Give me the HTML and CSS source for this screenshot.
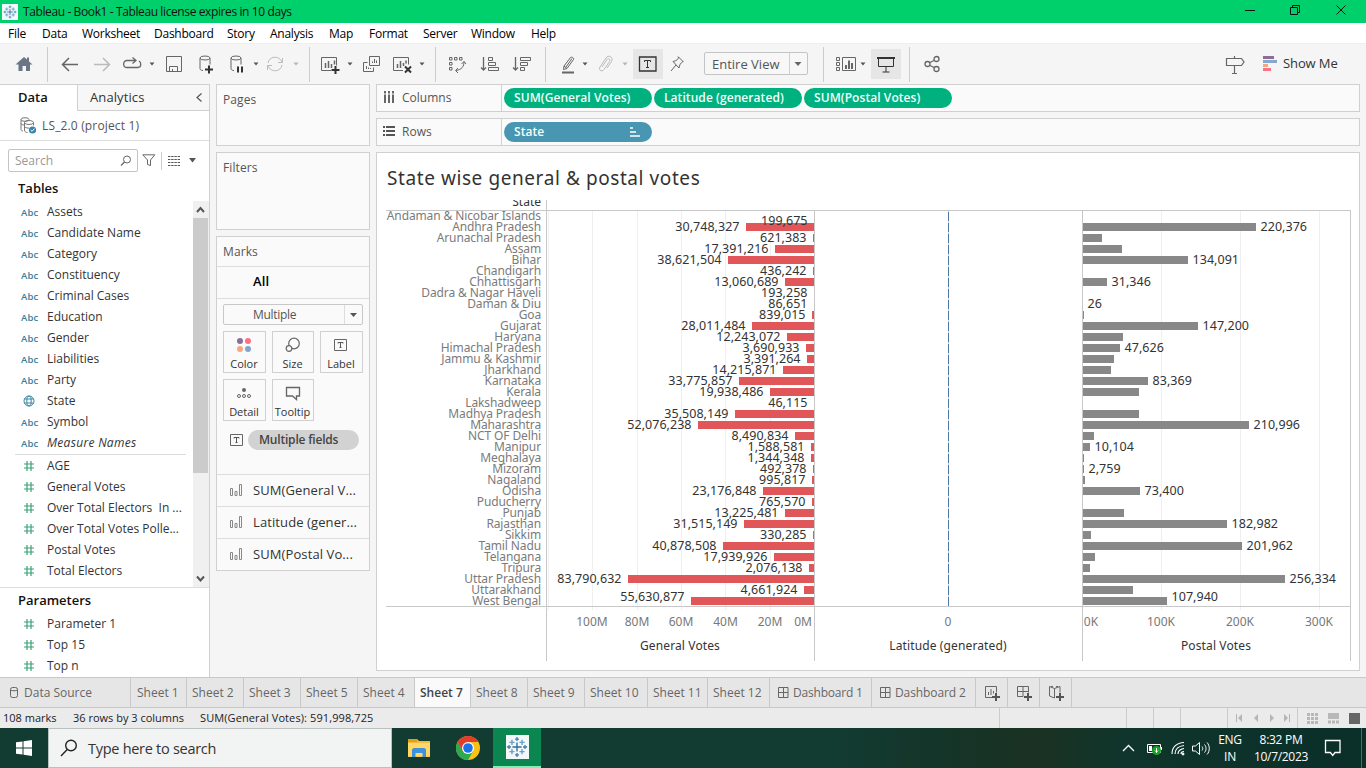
FILE: index.html
```html
<!DOCTYPE html>
<html lang="en">
<head>
<meta charset="utf-8">
<title>Tableau - Book1</title>
<link rel="stylesheet" href="styles.css">
</head>
<body>
<svg class="defs" width="0" height="0">
  <symbol id="tableau" viewBox="0 0 24 24"><path d="M12 7v10M7 12h10" stroke="#2f6f9c" stroke-width="1.500"/><path d="M12 1v4.500M9.800 3.300h4.400M12 18.500V23M9.800 20.700h4.400M3.300 9.800v4.400M1 12h4.500M20.700 9.800v4.400M18.500 12H23" stroke="#3f7fb0" stroke-width="1.400"/><path d="M6.500 4.200v5.600M3.700 7h5.600M17.500 4.200v5.600M14.700 7h5.600M6.500 14.200v5.600M3.700 17h5.600M17.500 14.200v5.600M14.700 17h5.600" stroke="#6aa0c4" stroke-width="1.500"/></symbol>
  <symbol id="caret" viewBox="0 0 8 20"><path d="M1.500 8.500h5L4 11.500z" fill="#555"/></symbol>
  <symbol id="hash" viewBox="0 0 12 12"><path d="M4 1v10M8 1v10M1 4h10M1 8h10" stroke="#3aa177" stroke-width="1.2"/></symbol>
  <symbol id="bars" viewBox="0 0 14 14"><path d="M1.500 5.500h2v7h-2zM6 8.500h2v4H6zM10.500 1.500h2v11h-2z" fill="none" stroke="#888"/></symbol>
  <symbol id="tbox" viewBox="0 0 14 14"><path d="M.5 1.500h12v11H.5z" fill="none" stroke="#666"/><path d="M4 5.500V4.500h5v1M6.500 4.500v5M5.500 9.500h2" fill="none" stroke="#555"/></symbol>
  <symbol id="dash" viewBox="0 0 12 12"><path d="M1.500 .5h9.500v10H1.500zM6.500 .5v10M1.500 5.500h9.500" fill="none" stroke="#666"/></symbol>
</svg>

<header class="titlebar">
  <span class="logo"><svg width="14" height="14"><use href="#tableau"/></svg></span>
  <span class="title">Tableau - Book1 - Tableau license expires in 10 days</span>
  <svg class="winbtns" width="110" height="23" fill="none" stroke="#111"><path d="M5 10.500h10M50.500 7.500h7v7h-7zM52.500 7V5.500h7v7H58M96.500 5.500l9 9M105.500 5.500l-9 9"/></svg>
</header>

<nav class="menu">
  <span>File</span><span>Data</span><span>Worksheet</span><span>Dashboard</span><span>Story</span><span>Analysis</span><span>Map</span><span>Format</span><span>Server</span><span>Window</span><span>Help</span>
</nav>

<div class="toolbar">
  <svg class="ic m14" viewBox="0 0 20 20"><path d="M1.500 10.500L10 3l3 2.500V3.500h2v4l3.500 3H16V17h-4v-5H8.500v5h-4v-6.500z" fill="#6b7685"/></svg>
  <i class="sep m13"></i>
  <svg class="ic m12" viewBox="0 0 20 20" stroke-width="1.5"><path d="M18 10.500H2.500M9 4l-6.500 6.500L9 17"/></svg>
  <svg class="ic m12 off" viewBox="0 0 20 20" stroke-width="1.5"><path d="M2 10.500h15.500M11 4l6.500 6.500L11 17"/></svg>
  <svg class="ic m10" viewBox="0 0 20 20" stroke-width="1.300"><path d="M13 6.500H5c-4.500 0-4.500 7 0 7h11c3.500 0 3.500-5 1-6.500M10.500 3.500l3.500 3-3.500 3"/></svg>
  <svg class="ca m6"><use href="#caret"/></svg>
  <svg class="ic m8" viewBox="0 0 20 20"><path d="M2.500 2.500h15v15h-15zM5.500 17.500v-5h8v5M8.500 17v-2"/></svg>
  <svg class="ic m12" viewBox="0 0 20 20"><ellipse cx="9" cy="4" rx="5" ry="2"/><path d="M4 4V14.500c0 1 1 2 3 2M14 4V10.500"/><path d="M13 11.500v8M9 15.500h8" stroke-width="2" stroke="#333"/></svg>
  <svg class="ic m11" viewBox="0 0 20 20"><ellipse cx="9" cy="4" rx="5" ry="2"/><path d="M4 4V14.500c0 1 1 2 3 2M14 4V10.500"/><path d="M11 12.500v6M15 12.500v6" stroke-width="2" stroke="#333"/></svg>
  <svg class="ca m5"><use href="#caret"/></svg>
  <svg class="ic m5 off" viewBox="0 0 20 20"><path d="M3 9c1-7 11-8 14-1M17 11c-1 7-11 8-14 1M17.500 4v4.500H13M2.500 16v-4.500H7"/></svg>
  <svg class="ca m7 off"><use href="#caret"/></svg>
  <i class="sep m9"></i>
  <svg class="ic m10" viewBox="0 0 20 20"><path d="M11 16.500H1.500v-13h15v8"/><path d="M5.500 9v5M8.500 7v7M11.500 10v4M14.500 6.500v4" stroke-width="1.500"/><path d="M15.500 12v8M11.500 16h8" stroke-width="2" stroke="#333"/></svg>
  <svg class="ca m6"><use href="#caret"/></svg>
  <svg class="ic m7" viewBox="0 0 20 20"><path d="M8.500 2.500h10v9h-10zM6.500 8.500h-4v9h10v-4M11.500 9V7.500M13.500 9V5M15.500 9V6.500M5.500 15v-3M7.500 15v-1.500M9.500 15v-1"/></svg>
  <svg class="ic m12" viewBox="0 0 20 20"><path d="M10 16.500H.5v-13h15v7"/><path d="M4.500 10v4M7.500 7v7M10.500 9v3M13 6.500v3" stroke-width="1.500"/><path d="M12 12.500l6 6M18 12.500l-6 6" stroke-width="2" stroke="#333"/></svg>
  <svg class="ca m5"><use href="#caret"/></svg>
  <i class="sep m9"></i>
  <svg class="ic m11" viewBox="0 0 20 20"><path d="M2.500 3.500h2.500v2.500h-2.500zM7.500 3.500h2.500v2.500h-2.500zM12.500 3.500h2.500v2.500h-2.500zM2.500 8.500h2.500v2.500h-2.500zM2.500 13.500h2.500v2.500h-2.500zM17 7.500c0 5-2 8-8 9M14.500 10l2.500-2.500 2 2.500M11 14l-2.500 2.500 2.500 2.500"/></svg>
  <svg class="ic m13" viewBox="0 0 20 20"><path d="M3.500 3v13M1 13.500l2.500 2.500L6 13.500" stroke-width="1.300"/><path d="M8.500 3.500h4v3h-4zM8.500 8.500h7v3h-7zM8.500 13.500h10v3h-10z"/></svg>
  <svg class="ic m12" viewBox="0 0 20 20"><path d="M3.500 3v13M1 13.500l2.500 2.500L6 13.500" stroke-width="1.300"/><path d="M8.500 3.500h10v3h-10zM8.500 8.500h7v3h-7zM8.500 13.500h4v3h-4z"/></svg>
  <i class="sep m13"></i>
  <svg class="ic m12" viewBox="0 0 20 20"><path d="M6 12l6.500-8.500c1-1 4 .5 3 2L9 14.500l-3.500 1zM6 12l3 2.500M8 13l6-8.500"/><path d="M4 18.500h12" stroke-width="2"/></svg>
  <svg class="ca m3"><use href="#caret"/></svg>
  <svg class="ic m6 off" viewBox="0 0 20 20"><path d="M7 13l5-7.500c1.500-2 4 0 2.500 2L9 15.500c-2 3-6 .5-4-2.500L11 4c2.500-4 8-.5 5.500 3.500L12 14"/></svg>
  <svg class="ca m6 off"><use href="#caret"/></svg>
  <span class="tool-on m4"><svg class="ic" viewBox="0 0 20 20"><path d="M1.500 3h16.500v14H1.500z" stroke="#333" stroke-width="1.300"/><path d="M6.500 8V6.500h6V8M9.500 6.500V14M8 13.500h3" stroke="#333"/></svg></span>
  <svg class="ic m4" viewBox="0 0 20 20"><path d="M11 2.500l5.500 5.500M11.500 3c0 2-2 4-5.500 4.500l6 6.500c.5-3 1.500-5 4-6.500M9 11l-5 6"/></svg>
  <span class="select m17"><span>Entire View</span><b></b><svg class="ca" viewBox="0 0 8 20"><path d="M.5 8h7L4 12z" fill="#666"/></svg></span>
  <i class="sep m15"></i>
  <svg class="ic m12" viewBox="0 0 20 20"><path d="M.5 3.500h3v3h-3zM.5 8.500h3v3h-3zM.5 13.500h3v3h-3zM6.500 3.500h13v13h-13z"/><path d="M10 11v4M13 6.500v8.500M16 9v6" stroke-width="2"/></svg>
  <svg class="ca m3"><use href="#caret"/></svg>
  <span class="tool-on m4"><svg class="ic" viewBox="0 0 20 20"><path d="M2.500 4v8.500h15V4M10 12v6M6.500 18h7" stroke="#333"/><path d="M1 4h18" stroke="#333" stroke-width="2"/></svg></span>
  <i class="sep m8"></i>
  <svg class="ic m12" viewBox="0 0 20 20" stroke-width="1.300"><circle cx="5.500" cy="10" r="2.500"/><circle cx="14.500" cy="5" r="2.500"/><circle cx="14.500" cy="15" r="2.500"/><path d="M8 8.500l4-2M8 11.500l4 2"/></svg>
  <svg class="ic sign" viewBox="0 0 20 20"><path d="M1.500 4.500h15l2.500 3.500-2.500 3.500h-15zM9.500 2v2.500M9.500 11.500V19M7 19.500h5" stroke-width="1.200"/></svg>
  <svg class="m18" width="14" height="16"><path d="M0 0h11v3H0z" fill="#8b6f98"/><path d="M0 4h14v3H0z" fill="#86a7d0"/><path d="M0 8h5v3H0z" fill="#f2a77c"/><path d="M0 12h8v3H0z" fill="#fb7185"/></svg>
  <span class="showme m6">Show Me</span>
</div>

<main class="work">
  <aside class="data">
    <div class="dtabs"><b>Data</b><span>Analytics<svg width="8" height="12"><path d="M6.500 1.500L2 5.500l4.500 4" fill="none" stroke="#555" stroke-width="1.200"/></svg></span></div>
    <div class="source"><svg width="17" height="18" viewBox="0 0 17 18" fill="none" stroke="#777"><ellipse cx="5" cy="2.500" rx="4" ry="1.800"/><path d="M1 2.500v10c0 1 1 1.500 2 1.500M4.500 6v8"/><ellipse cx="9" cy="5.500" rx="4.500" ry="2"/><path d="M4.500 5.500v8c0 1 1.500 2 3 2M13.500 5.500v3M1 6.500c0 1 2 1.500 3 1.500M5 10c1 1 3 1.200 4 1"/><circle cx="12.500" cy="13" r="3.600" fill="#3584a9" stroke="none"/><path d="M10.700 13l1.400 1.400 2.300-2.800" stroke="#fff"/></svg><span>LS_2.0 (project 1)</span></div>
    <div class="find">
      <span class="box">Search<svg width="12" height="12"><circle cx="7" cy="4.500" r="3.500" fill="none" stroke="#666"/><path d="M4.500 7L1 10.500" stroke="#666" stroke-width="1.200"/></svg></span>
      <svg class="funnel" width="14" height="13"><path d="M.8.8h12L8.500 6v5.500l-3-1V6z" fill="none" stroke="#666"/></svg>
      <i></i>
      <svg class="cols" width="12" height="10"><path d="M0 .5h12M0 3.500h12M0 6.500h12M0 9.500h12" stroke="#555" stroke-dasharray="2.400 .8"/></svg>
      <svg class="tri" width="8" height="5"><path d="M0 0h7L3.500 4.500z" fill="#555"/></svg>
    </div>
    <h2>Tables</h2>
    <div class="lists">
      <ul class="fields">
        <li><em>Abc</em>Assets</li><li><em>Abc</em>Candidate Name</li><li><em>Abc</em>Category</li><li><em>Abc</em>Constituency</li><li><em>Abc</em>Criminal Cases</li><li><em>Abc</em>Education</li><li><em>Abc</em>Gender</li><li><em>Abc</em>Liabilities</li><li><em>Abc</em>Party</li>
        <li><svg width="12" height="12" fill="none" stroke="#3a86a3"><circle cx="6" cy="6" r="5"/><ellipse cx="6" cy="6" rx="2.200" ry="5"/><path d="M1.500 4h9M1.500 8h9"/></svg>State</li>
        <li><em>Abc</em>Symbol</li><li class="italic"><em>Abc</em>Measure Names</li>
        <li class="rule"></li>
        <li><svg><use href="#hash"/></svg>AGE</li><li><svg><use href="#hash"/></svg>General Votes</li><li><svg><use href="#hash"/></svg>Over Total Electors&nbsp; In ...</li><li><svg><use href="#hash"/></svg>Over Total Votes Polle...</li><li><svg><use href="#hash"/></svg>Postal Votes</li><li><svg><use href="#hash"/></svg>Total Electors</li>
      </ul>
      <div class="scroll"><svg width="15" height="17"><path d="M4 11l3.500-4L11 11" fill="none" stroke="#555" stroke-width="2"/></svg><i></i><svg width="15" height="17"><path d="M4 6.500l3.500 4L11 6.500" fill="none" stroke="#555" stroke-width="2"/></svg></div>
    </div>
    <div class="params">
      <h2>Parameters</h2>
      <ul class="fields"><li><svg><use href="#hash"/></svg>Parameter 1</li><li><svg><use href="#hash"/></svg>Top 15</li><li><svg><use href="#hash"/></svg>Top n</li></ul>
    </div>
  </aside>

  <section class="cards">
    <div class="card pages">Pages</div>
    <div class="card filters">Filters</div>
    <div class="card marks">
      <div class="mhead">Marks</div>
      <div class="mall">All</div>
      <div class="mbody">
        <div class="mselect"><span>Multiple</span><i><svg width="7" height="4"><path d="M0 0h7L3.500 4z" fill="#555"/></svg></i></div>
        <div class="mgrid">
          <div><svg width="16" height="16"><circle cx="4" cy="4" r="3" fill="#8b6f98"/><circle cx="12" cy="4" r="3" fill="#fb7185"/><circle cx="4" cy="12" r="3" fill="#f5a67d"/><circle cx="12" cy="12" r="3" fill="#80a5d0"/></svg>Color</div>
          <div><svg width="16" height="16" fill="none" stroke="#666" stroke-width="1.200"><circle cx="9" cy="6.500" r="5.300"/><circle cx="4" cy="11.500" r="2.800" fill="#fafafa"/></svg>Size</div>
          <div><svg width="14" height="16" viewBox="0 -1 14 16"><use href="#tbox" width="14" height="14"/></svg>Label</div>
          <div><svg width="16" height="16" fill="none" stroke="#666"><circle cx="8" cy="5" r="2" fill="#666" stroke="none"/><circle cx="3" cy="11" r="1.500"/><circle cx="8" cy="11" r="1.500"/><circle cx="13" cy="11" r="1.500"/></svg>Detail</div>
          <div><svg width="16" height="16" fill="none" stroke="#666" stroke-width="1.300"><path d="M1.500 2.500h13v8.500h-3v3.500L7.500 11h-6z"/></svg>Tooltip</div>
        </div>
        <div class="mpill"><svg width="14" height="14"><use href="#tbox"/></svg><span>Multiple fields</span></div>
      </div>
      <div class="mrow"><svg><use href="#bars"/></svg>SUM(General V...</div>
      <div class="mrow"><svg><use href="#bars"/></svg>Latitude (gener...</div>
      <div class="mrow"><svg><use href="#bars"/></svg>SUM(Postal Vo...</div>
    </div>
  </section>

  <section class="sheet">
    <div class="shelf"><div class="name"><svg width="13" height="13"><path d="M2 0v2.500M6 0v2.500M10 0v2.500M2 3.500V12M6 3.500V12M10 3.500V12" stroke="#666" stroke-width="2"/></svg>Columns</div><span class="pill">SUM(General Votes)</span><span class="pill">Latitude (generated)</span><span class="pill">SUM(Postal Votes)</span></div>
    <div class="shelf"><div class="name"><svg width="13" height="13"><path d="M0 2h2M0 6h2M0 10h2M3 2h9M3 6h9M3 10h9" stroke="#555" stroke-width="2"/></svg>Rows</div><span class="pill blue">State<svg width="10" height="10"><path d="M0 1h3M0 5h6M0 9h10" stroke="#fff" stroke-width="1.700"/></svg></span></div>
    <div class="view">
      <h1>State wise general &amp; postal votes</h1>
      <svg id="chart" width="982" height="470" viewBox="377 200 982 470"></svg>
    </div>
  </section>
</main>

<nav class="tabs">
  <span class="t-src"><svg width="10" height="12" fill="none" stroke="#666"><rect x="1.500" y=".5" width="7" height="10" rx="2"/><path d="M1.500 3c2 1 5 1 7 0"/></svg>Data Source</span>
  <span class="s1">Sheet 1</span><span class="s2">Sheet 2</span><span class="s">Sheet 3</span><span class="s">Sheet 5</span><span class="s">Sheet 4</span><span class="s2 on">Sheet 7</span><span class="s">Sheet 8</span><span class="s">Sheet 9</span><span class="s10">Sheet 10</span><span class="s11">Sheet 11</span><span class="s12">Sheet 12</span>
  <span class="d1"><svg width="12" height="12"><use href="#dash"/></svg>Dashboard 1</span><span class="d2"><svg width="12" height="12"><use href="#dash"/></svg>Dashboard 2</span>
  <span class="new"><svg width="17" height="16" fill="none" stroke="#666"><path d="M8 12.500H1.500V1.500h11v6M4.500 10V7M7 10V4M9.500 8.500V6"/><path d="M12 8v8M8 12h8" stroke-width="2" stroke="#555"/></svg></span>
  <span class="new"><svg width="17" height="16" fill="none" stroke="#666"><path d="M7 11.500H1.500v-10h11v6M7 1.500v10M1.500 6.500h11"/><path d="M12 8v8M8 12h8" stroke-width="2" stroke="#555"/></svg></span>
  <span class="new"><svg width="17" height="16" fill="none" stroke="#666"><path d="M6.500 3.500L1.500 1.500v9.500l5 2zM6.500 3.500l5.500-2v6M3 1.500h2M8 1.500h2"/><path d="M12 8v8M8 12h8" stroke-width="2" stroke="#555"/></svg></span>
</nav>

<div class="status">
  <span class="a">108 marks</span><span class="b">36 rows by 3 columns</span><span class="c">SUM(General Votes): 591,998,725</span>
  <i class="x1"></i><i class="x2"></i><i class="x3"></i><i class="x4"></i>
  <span class="page"><svg width="69" height="20" fill="#b5b5b5"><path d="M8 6h1v8H8zM14 6v8l-4-4zM30 6v8l-4-4zM42 6v8l4-4zM56 6v8l4-4zM61 6h1v8h-1z"/></svg></span>
  <svg class="views" width="68" height="20"><path d="M9 6.500h11M9 10.500h11M9 14.500h11" stroke="#b8b8b8" stroke-width="3" stroke-dasharray="3 1"/><path d="M30 5h11v6H30z" fill="#b8b8b8"/><path d="M30 14h11" stroke="#b8b8b8" stroke-width="3" stroke-dasharray="3 1"/><path d="M51 5h11v11H51z" fill="#666"/></svg>
</div>

<footer class="taskbar">
  <span class="start"><svg width="16" height="16" fill="#fff"><path d="M0 2.300L6.500 1.400v6.100H0zM7.500 1.200L16 0v7.500H7.500zM0 8.500h6.500v6.100L0 13.700zM7.500 8.500H16V16l-8.500-1.200z"/></svg></span>
  <span class="search"><svg width="18" height="18" fill="none" stroke="#222" stroke-width="1.400"><circle cx="11" cy="6.500" r="5.300"/><path d="M7.200 10.500L1 17"/></svg>Type here to search</span>
  <span class="app"><svg width="22" height="20"><path d="M0 1h9l2 2h11v16H0z" fill="#f5b93b"/><path d="M0 1h9v3H0z" fill="#e39d10"/><path d="M0 5h22v13.500H0z" fill="#ffd768"/><path d="M4 19v-7.500l1.500-1.500h11l1.500 1.500V19h-3.500v-4h-7v4z" fill="#3e92dc"/></svg></span>
  <span class="app chrome"><svg width="24" height="24" viewBox="-12 -12 24 24"><circle r="12" fill="#fbc116"/><path d="M-10.400-6A12 12 0 0 0 0 12L5.200 3-5.200 3z" fill="#2da94f"/><path d="M-10.400-6A12 12 0 0 1 10.400-6H0L-5.200 3z" fill="#e33b2e"/><circle r="6" fill="#fff"/><circle r="4.800" fill="#1a73e8"/></svg></span>
  <span class="app active"><span><svg width="22" height="22"><use href="#tableau"/></svg></span></span>
  <span class="tray"><svg width="90" height="24" fill="none" stroke="#fff"><path d="M1 15l5.500-5.500L12 15" stroke-width="1.300"/><path d="M25.500 8.500h13v8h-13zM39.500 11v3" /><path d="M27 10h3v5h-3z" fill="#fff" stroke="none"/><circle cx="34.500" cy="14.500" r="4.500" fill="#13a323" stroke="none"/><path d="M34.500 12v5M33 14.500l1.500 1.500 1.500-1.500"/><path d="M50 18C50 11 55 7 62 6.500M53 18c0-5 4-8 9-8.500M56 18c0-3 3-5 6-5.500M59 18c0-1.500 1.500-2.500 3-2.500" stroke-width="1.200"/><circle cx="61" cy="18" r="1" fill="#fff"/><path d="M70.500 10h3l4-3.500v12l-4-3.500h-3zM80 10.500c1 1 1 3 0 4M82.500 8.500c2 2 2 6 0 8M85 6.500c3 3 3 9 0 12"/></svg></span>
  <span class="lang">ENG<br>IN</span>
  <span class="clock">8:32 PM<br>10/7/2023</span>
  <svg class="note" width="18" height="18" fill="none" stroke="#fff" stroke-width="1.300"><path d="M1.500 1.500h14.500v12h-5l-2.300 3-2.300-3H1.500z"/></svg>
  <i class="peek"></i>
</footer>
<script src="chart.js"></script>
</body>
</html>
```
FILE: chart.js
```js
// name, general votes, postal votes, show postal label
const rows = [
  ["Andaman & Nicobar Islands", 199675, 0], ["Andhra Pradesh", 30748327, 220376, 1],
  ["Arunachal Pradesh", 621383, 25000], ["Assam", 17391216, 50500],
  ["Bihar", 38621504, 134091, 1], ["Chandigarh", 436242, 0],
  ["Chhattisgarh", 13060689, 31346, 1], ["Dadra & Nagar Haveli", 193258, 0],
  ["Daman & Diu", 86651, 26, 1], ["Goa", 839015, 2400],
  ["Gujarat", 28011484, 147200, 1], ["Haryana", 12243072, 52000],
  ["Himachal Pradesh", 3690933, 47626, 1], ["Jammu & Kashmir", 3391264, 40500],
  ["Jharkhand", 14215871, 36500], ["Karnataka", 33775857, 83369, 1],
  ["Kerala", 19938486, 72000], ["Lakshadweep", 46115, 0],
  ["Madhya Pradesh", 35508149, 72000], ["Maharashtra", 52076238, 210996, 1],
  ["NCT OF Delhi", 8490834, 15000], ["Manipur", 1588581, 10104, 1],
  ["Meghalaya", 1344348, 2500], ["Mizoram", 492378, 2759, 1],
  ["Nagaland", 995817, 3800], ["Odisha", 23176848, 73400, 1],
  ["Puducherry", 765570, 0], ["Punjab", 13225481, 53300],
  ["Rajasthan", 31515149, 182982, 1], ["Sikkim", 330285, 11400],
  ["Tamil Nadu", 40878508, 201962, 1], ["Telangana", 17939926, 16500],
  ["Tripura", 2076138, 10100], ["Uttar Pradesh", 83790632, 256334, 1],
  ["Uttarakhand", 4661924, 64500], ["West Bengal", 55630877, 107940, 1]
];
const svg = document.getElementById("chart");
const NS = "http://www.w3.org/2000/svg";
function el(tag, attrs, text) {
  const node = document.createElementNS(NS, tag);
  for (const key in attrs) node.setAttribute(key, attrs[key]);
  if (text !== undefined) node.textContent = text;
  svg.appendChild(node);
}
const vline = (x, y1, y2, cls) => el("rect", { x, y: y1, width: 1, height: y2 - y1, class: cls });
const text = (x, y, cls, s) => el("text", { x, y, class: cls }, s);
const number = (x, y, cls, n) => {
  const s = n.toLocaleString("en-US");
  const commas = s.split(",").length - 1;
  el("text", { x, y, class: cls, textLength: (s.length - commas) * 7.2 + commas * 3.3 }, s);
};
const generalWidth = v => v < 200000 ? 0 : Math.max(1, Math.floor(v / 1e6 * 2.22 + 0.4));
const postalWidth = v => v < 1000 ? 0 : Math.max(1, Math.round(v / 1000 * 0.79 - 0.9));

[548, 592, 637, 681, 725, 770, 1161, 1240, 1319].forEach(x => vline(x, 211, 610, "grid"));
vline(948, 211, 606, "grid-dark");
rows.forEach(([name, general, postal], i) => {
  const y = 212 + i * 11;
  const g = generalWidth(general);
  el("rect", { x: 814 - g, y, width: g, height: 8, class: "general" });
  el("rect", { x: 1083, y, width: postalWidth(postal), height: 8, class: "postal" });
  vline(948, y, y + 9, "lat");
});
rows.forEach(([name, general, postal, labelled], i) => {
  const base = 220 + i * 11;
  const shift = i === 0 ? 5 : i === 35 ? -4 : 0;
  text(541, base, "state", name);
  number(807.5 - generalWidth(general), base + shift + 0.2, "num end", general);
  if (labelled) number(1087.500 + postalWidth(postal), base + shift + 0.2, "num", postal);
});
el("rect", { x: 386, y: 210, width: 965, height: 1, class: "axis" });
el("rect", { x: 386, y: 606, width: 965, height: 1, class: "axis" });
vline(546, 200, 661, "axis");
[814, 1082, 1350].forEach(x => vline(x, 211, 661, "axis"));
text(541, 206, "head end", "State");
[["100M", 592], ["80M", 637], ["60M", 681], ["40M", 725.500], ["20M", 770], ["0M", 803],
 ["0", 948], ["0K", 1091], ["100K", 1161], ["200K", 1240], ["300K", 1319]]
  .forEach(([s, x]) => text(x, 626, "tick", s));
text(680, 650, "head mid", "General Votes");
text(948, 650, "head mid", "Latitude (generated)");
text(1216, 650, "head mid", "Postal Votes");
```
FILE: styles.css
```css
* { box-sizing: border-box; }
body { margin: 0; width: 1366px; height: 768px; overflow: hidden; background: #f5f5f5; font-family: "Open Sans", "Noto Sans", sans-serif; font-size: 12px; color: #333; }
h1, h2, ul { margin: 0; padding: 0; }
li { list-style: none; }
svg { flex: none; }
.defs { display: block; }
.m3 { margin-left: 3px; } .m4 { margin-left: 4px; } .m5 { margin-left: 5px; } .m6 { margin-left: 6px; }
.m7 { margin-left: 7px; } .m8 { margin-left: 8px; } .m9 { margin-left: 9px; } .m10 { margin-left: 10px; }
.m11 { margin-left: 11px; } .m12 { margin-left: 12px; } .m13 { margin-left: 13px; } .m14 { margin-left: 14px; }
.m15 { margin-left: 15px; } .m17 { margin-left: 17px; } .m18 { margin-left: 18px; }

.titlebar { height: 23px; background: #00d06b; display: flex; align-items: center; color: #111; }
.logo { width: 16px; height: 16px; margin-left: 2px; background: #f3f8fb; display: flex; align-items: center; justify-content: center; }
.title { margin-left: 5px; letter-spacing: -0.39px; }
.winbtns { margin-left: auto; margin-right: 16px; }

.menu { height: 20px; background: #fff; display: flex; align-items: center; padding: 1px 0 0 8px; color: #000; letter-spacing: -0.25px; }
.menu span { width: 40px; }
.menu span:nth-child(1) { width: 34px; }
.menu span:nth-child(3) { width: 72px; }
.menu span:nth-child(4) { width: 73px; }
.menu span:nth-child(5) { width: 43px; }
.menu span:nth-child(6) { width: 59px; }
.menu span:nth-child(8) { width: 54px; }
.menu span:nth-child(9) { width: 48px; }
.menu span:nth-child(10) { width: 60px; }

.toolbar { height: 41px; display: flex; align-items: center; border-top: 1px solid #eee; }
.ic { width: 20px; height: 20px; fill: none; stroke: #666; }
.ic:first-child { stroke: none; }
.ca { width: 8px; height: 20px; }
.off { opacity: .4; }
.sep { width: 1px; height: 35px; background: #ccc; }
.tool-on { width: 30px; height: 30px; background: #e6e6e6; display: flex; align-items: center; justify-content: center; }
.select { width: 104px; height: 23px; border: 1px solid #c4c4c4; border-radius: 2px; background: #f7f7f7; display: flex; align-items: center; font-size: 13px; color: #555; padding-left: 7px; margin-top: -1px; }
.select span { width: 77px; white-space: nowrap; }
.select b { width: 1px; height: 21px; background: #d0d0d0; margin-right: 4px; }
.sign { margin-left: 283px; }
.showme { font-size: 13px; color: #333; white-space: nowrap; letter-spacing: -0.1px; padding-bottom: 2px; }

.work { height: 593px; display: flex; }
.data { width: 210px; border-top: 1px solid #d0d0d0; border-right: 1px solid #d0d0d0; background: #fff; display: flex; flex-direction: column; }
.dtabs { height: 26px; display: flex; font-size: 13px; line-height: 25px; }
.dtabs b { width: 77px; padding-left: 18px; color: #111; font-weight: 600; }
.dtabs span { flex: 1; border-left: 1px solid #d0d0d0; border-bottom: 1px solid #d0d0d0; background: #f7f7f7; display: flex; align-items: center; justify-content: space-between; padding: 0 6px 0 12px; letter-spacing: 0.1px; }
.source { height: 30px; border-bottom: 1px solid #ddd; display: flex; align-items: center; padding-left: 20px; gap: 5px; color: #555; letter-spacing: 0.15px; }
.source span { padding-bottom: 1px; }
.find { height: 38px; display: flex; align-items: center; padding: 1px 0 0 8px; }
.box { width: 130px; height: 23px; border: 1px solid #c4c4c4; border-radius: 2px; display: flex; align-items: center; justify-content: space-between; padding: 0 5px 0 6px; color: #999; }
.funnel { margin-left: 4px; }
.find i { width: 1px; height: 18px; background: #ccc; margin-left: 5px; }
.cols { margin-left: 6px; }
.tri { margin-left: 9px; }
h2 { font-size: 13px; font-weight: 600; line-height: 18px; padding-left: 18px; color: #111; }
.lists { margin-top: 4px; height: 386px; display: flex; justify-content: space-between; }
.fields li { height: 21px; display: flex; align-items: center; width: 185px; white-space: nowrap; }
.fields li.rule { height: 2px; width: 171px; margin-left: 15px; border-bottom: 1px solid #ddd; margin-bottom: 0; }
.fields em { font-style: normal; font-weight: 600; font-size: 9.500px; color: #3a7e9b; width: 26px; margin-left: 21px; padding-top: 1px; letter-spacing: 0.1px; }
.fields svg { width: 12px; height: 12px; margin: 0 12px 0 23px; }
.italic { font-style: italic; letter-spacing: 0.3px; }
.scroll { width: 16px; background: #f0f0f0; display: flex; flex-direction: column; }
.scroll i { width: 15px; height: 255px; background: #cbcbcb; margin-bottom: auto; }
.params { border-top: 1px solid #ddd; padding-top: 3px; }
.params .fields { padding-top: 4px; }

.cards { width: 154px; margin-left: 6px; display: flex; flex-direction: column; gap: 6px; color: #555; }
.card { border: 1px solid #d0d0d0; background: #fafafa; padding: 6px 6px; letter-spacing: 0.1px; }
.pages { height: 62px; }
.filters { height: 78px; }
.marks { height: 335px; padding: 0; }
.mhead { height: 30px; line-height: 30px; padding-left: 6px; border-bottom: 1px solid #ddd; }
.mall { height: 32px; line-height: 29px; padding-left: 36px; border-bottom: 1px solid #ddd; color: #000; font-weight: 600; font-size: 13px; }
.mbody { height: 175px; padding: 5px 6px; letter-spacing: 0; }
.mselect { height: 21px; border: 1px solid #c8c8c8; border-radius: 2px; display: flex; line-height: 20px; }
.mselect span { flex: 1; padding-left: 29px; letter-spacing: -0.3px; }
.mselect i { width: 18px; border-left: 1px solid #ddd; display: flex; align-items: center; justify-content: center; }
.mgrid { display: grid; grid-template-columns: 43px 42px 43px; gap: 6px; margin-top: 6px; }
.mgrid div { height: 42px; border: 1px solid #d0d0d0; display: flex; flex-direction: column; align-items: center; font-size: 11px; line-height: 14px; padding: 5px 1px 0 0; gap: 4px; color: #333; }
.mpill { display: flex; align-items: center; margin-top: 9px; padding-left: 7px; gap: 4px; }
.mpill span { width: 111px; height: 20px; border-radius: 10px; background: #d2d2d2; padding-left: 11px; line-height: 19px; font-weight: 600; color: #444; letter-spacing: -0.2px; }
.mrow { height: 32px; border-top: 1px solid #ddd; display: flex; align-items: center; padding: 0 0 2px 12px; font-size: 13px; color: #333; white-space: nowrap; }
.mrow svg { width: 14px; height: 14px; margin-right: 10px; }

.sheet { width: 984px; margin-left: 6px; display: flex; flex-direction: column; gap: 6px; }
.shelf { height: 28px; border: 1px solid #d0d0d0; background: #fafafa; display: flex; align-items: center; gap: 2px; }
.name { width: 125px; height: 26px; border-right: 1px solid #d0d0d0; display: flex; align-items: center; gap: 6px; padding: 0 0 1px 6px; color: #555; }
.pill { width: 148px; height: 20px; border-radius: 10px; background: #00b180; color: #f2fffa; font-weight: 600; padding: 0 12px 0 10px; line-height: 19px; display: flex; align-items: center; justify-content: space-between; white-space: nowrap; letter-spacing: 0.07px; padding-bottom: 1px; }
.blue { background: #4996b2; }
.view { height: 519px; border: 1px solid #d0d0d0; background: #fff; }
h1 { font-family: "Noto Sans", sans-serif; font-size: 19px; font-weight: 400; line-height: 28px; height: 47px; padding: 11px 0 0 10px; color: #333; letter-spacing: 0.58px; }
#chart { display: block; font-family: "Noto Sans", sans-serif; font-size: 12px; }
.grid { fill: #efefef; } .grid-dark { fill: #d0d0d0; } .axis { fill: #c8c8c8; }
.general { fill: #e15759; } .postal { fill: #888; } .lat { fill: #4e79a7; }
.state { text-anchor: end; fill: #7b7b7b; letter-spacing: -0.12px; }
.num { fill: #333; font-size: 12.500px; }
.end { text-anchor: end; }
.mid { text-anchor: middle; letter-spacing: 0.12px; }
.head { fill: #333; }
.tick { text-anchor: middle; fill: #787878; }

.tabs { height: 31px; background: #e6e6e6; border-top: 1px solid #c8c8c8; border-bottom: 1px solid #c8c8c8; display: flex; color: #666; line-height: 29px; white-space: nowrap; }
.tabs > span { border-right: 1px solid #c8c8c8; padding-left: 5px; width: 57px; display: flex; align-items: center; }
.tabs .t-src { width: 131px; padding-left: 9px; gap: 5px; }
.tabs .s1 { width: 56px; padding-left: 6px; }
.tabs .s2 { width: 56px; }
.tabs .s2:nth-child(3) { width: 57px; }
.tabs .on { background: #fafafa; font-weight: 600; color: #444; }
.tabs .s10 { width: 63px; } .tabs .s11 { width: 60px; } .tabs .s12 { width: 62px; }
.tabs .d1 { width: 102px; padding-left: 7px; gap: 4px; letter-spacing: -0.2px; }
.tabs .d2 { width: 104px; padding-left: 7px; gap: 4px; letter-spacing: -0.1px; }
.tabs .new { width: 32px; padding-left: 8px; }

.status { height: 20px; background: #ebebeb; display: flex; align-items: center; font-size: 11px; color: #222; white-space: nowrap; }
.status span { padding-bottom: 2px; }
.status .a { padding-left: 3px; width: 73px; } .status .b { width: 127px; } .status .c { width: 799px; letter-spacing: 0.1px; }
.status i { height: 20px; border-left: 1px solid #ccc; }
.x1 { width: 127px; } .x2 { width: 27px; } .x3 { width: 27px; } .x4 { width: 47px; }
.status .page { width: 71px; height: 20px; border-left: 1px solid #ccc; border-right: 1px solid #ccc; padding: 0; }

.taskbar { height: 40px; background: linear-gradient(90deg, #123c32 0, #123c32 60%, #153428 70%, #1a3122 76%, #10352b 82%, #0a2f29 100%); display: flex; align-items: center; color: #fff; }
.start { width: 48px; display: flex; justify-content: center; }
.search { width: 344px; height: 40px; background: #f2f4f3; border: 1px solid #b9c2be; display: flex; align-items: center; gap: 10px; padding-left: 11px; font-size: 14.500px; color: #333; letter-spacing: -0.28px; }
.app { width: 49px; height: 40px; display: flex; align-items: center; justify-content: center; }
.search + .app { width: 53px; }
.chrome { padding-right: 4px; }
.active { width: 48px; background: #0b8650; border-bottom: 2px solid #7df0b5; margin-left: -1px; }
.active span { width: 23px; height: 24px; background: #f4f7f8; display: flex; align-items: center; justify-content: center; }
.tray { margin-left: 581px; height: 24px; }
.lang, .clock { line-height: 17px; text-align: center; letter-spacing: -0.3px; padding-bottom: 1px; }
.lang { width: 30px; margin-left: 3px; }
.clock { width: 60px; margin-left: 6px; }
.note { margin-left: 13px; }
.peek { width: 1px; height: 40px; background: #4d6b64; margin-left: 19px; }
```
